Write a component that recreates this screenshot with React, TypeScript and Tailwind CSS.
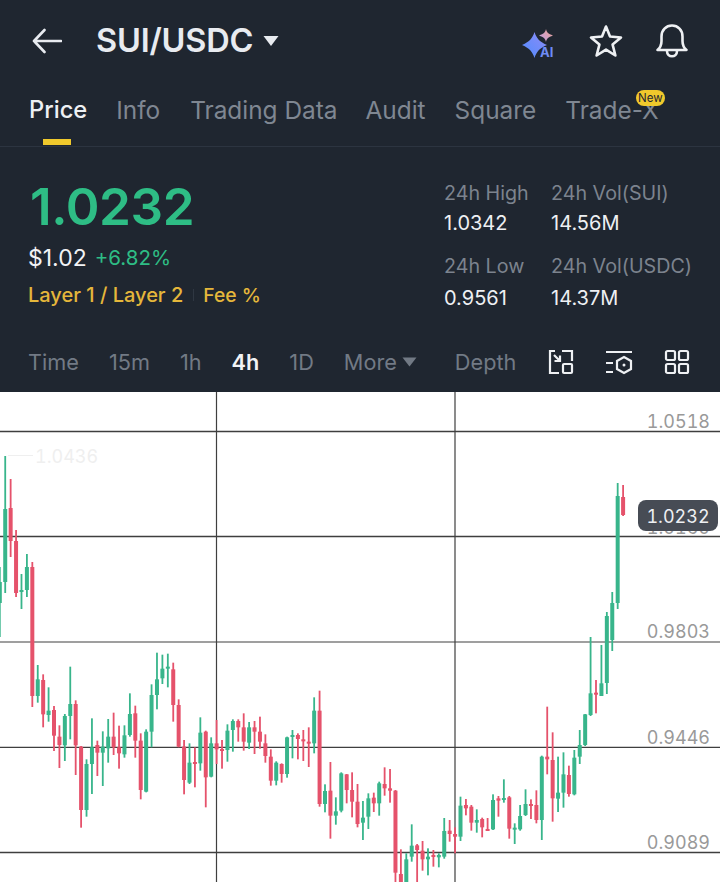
const GREEN = "#38b58b";
const RED = "#e5526b";

type C = [number, "g" | "r", number, number, number, number];

// [index, colour, high, low, bodyTop, bodyBottom] in page pixels
const raw: C[] = [
  [0, "g", 567, 637, 582, 603],
  [1, "g", 456, 593, 509, 582],
  [2, "r", 479, 557, 508, 541],
  [3, "r", 530, 597, 541, 593],
  [4, "g", 574, 609, 590, 592],
  [5, "g", 554, 597, 567, 590],
  [6, "r", 562, 707, 567, 696],
];

const z: Array<["g" | "r", number, number, number, number]> = [
  ["g", 75, 188, 118, 168], ["r", 103, 262, 120, 223], ["g", 142, 245, 212, 225], ["r", 198, 333, 210, 287],
  ["r", 256, 384, 290, 315], ["g", 222, 363, 228, 316], ["g", 80, 298, 192, 228], ["r", 181, 405, 192, 316],
  ["r", 318, 563, 320, 510], ["g", 358, 530, 372, 510], ["g", 235, 462, 322, 372], ["r", 302, 408, 315, 338],
  ["g", 274, 438, 320, 338], ["g", 237, 368, 290, 325], ["r", 218, 345, 290, 322], ["r", 257, 386, 322, 340],
  ["g", 256, 353, 286, 343], ["g", 160, 290, 222, 285], ["r", 197, 353, 220, 302], ["r", 280, 478, 302, 450],
  ["g", 268, 457, 275, 455], ["g", 133, 322, 165, 275], ["g", 38, 208, 118, 165], ["g", 44, 132, 86, 115],
  ["g", 41, 142, 80, 86], ["r", 68, 245, 88, 195], ["r", 178, 322, 195, 320], ["r", 300, 463, 320, 420],
  ["g", 310, 432, 368, 428], ["r", 322, 442, 366, 370], ["g", 232, 392, 278, 370], ["r", 272, 502, 275, 412],
  ["g", 292, 412, 310, 410], ["r", 240, 372, 310, 328], ["r", 300, 386, 327, 332], ["g", 253, 365, 272, 330],
  ["g", 238, 335, 243, 270], ["r", 238, 305, 243, 262],
  ["r", 220, 332, 262, 305], ["g", 246, 327, 262, 308], ["r", 243, 342, 262, 275], ["r", 230, 326, 275, 305],
  ["r", 283, 368, 310, 348], ["r", 328, 437, 350, 422], ["g", 364, 436, 368, 422], ["r", 370, 428, 372, 402],
  ["g", 290, 413, 292, 402], ["g", 270, 355, 285, 290], ["r", 280, 358, 285, 297], ["r", 270, 363, 298, 303],
  ["r", 262, 381, 305, 310], ["g", 172, 340, 212, 310], ["r", 152, 500, 212, 492], ["g", 433, 517, 453, 492],
  ["r", 366, 596, 452, 527], ["g", 472, 554, 514, 527], ["g", 397, 517, 400, 512], ["r", 402, 490, 403, 450],
  ["r", 397, 532, 450, 485], ["r", 432, 562, 485, 552], ["g", 483, 600, 533, 548], ["g", 460, 567, 475, 530],
  ["r", 458, 516, 473, 490], ["g", 425, 527, 430, 490], ["r", 382, 467, 432, 445], ["r", 387, 488, 445, 452],
  ["r", 450, 726, 452, 698], ["r", 628, 726, 702, 726], ["g", 640, 726, 658, 726], ["g", 553, 665, 617, 650],
  ["r", 612, 726, 616, 630], ["r", 603, 692, 632, 658], ["g", 625, 706, 650, 658], ["r", 630, 680, 645, 650],
  ["g", 640, 682, 645, 652], ["g", 534, 656, 573, 650], ["r", 540, 605, 572, 582], ["r", 562, 640, 582, 590],
  ["g", 470, 603, 497, 590], ["r", 477, 526, 495, 505], ["r", 495, 572, 500, 548], ["g", 508, 578, 540, 548],
  ["r", 533, 592, 537, 562], ["r", 534, 573, 567, 572], ["g", 463, 570, 480, 568], ["r", 468, 530, 475, 482],
  ["g", 418, 488, 474, 478], ["r", 468, 596, 472, 566], ["g", 550, 612, 563, 567], ["g", 495, 572, 528, 568],
  ["g", 448, 528, 492, 525], ["r", 478, 537, 492, 495], ["r", 451, 550, 495, 540], ["g", 347, 600, 350, 540],
  ["r", 200, 403, 350, 358], ["r", 277, 545, 360, 475], ["g", 350, 516, 458, 476], ["g", 337, 503, 403, 458],
  ["r", 377, 470, 405, 462], ["g", 330, 466, 353, 463], ["g", 270, 372, 315, 350], ["g", 222, 318, 223, 315],
  ["g", -9, 228, 160, 225], ["r", 120, 220, 158, 163], ["g", 15, 168, 130, 168],
];

const y = (v: number) => 640 + v / 3;
const candles: C[] = [
  ...raw,
  ...z.map((c, k): C => [k + 7, c[0], y(c[1]), y(c[2]), y(c[3]), y(c[4])]),
  [112, "g", 612, 694, 616, 683],
  [113, "g", 592, 651, 603, 640],
  [114, "g", 483, 609, 496, 603],
  [115, "r", 485, 516, 497, 515],
];

const BASE = 392;
const hLines = [
  { v: 431.5, c: "#3f3f3f" },
  { v: 536.5, c: "#3f3f3f" },
  { v: 642, c: "#7f7f7f" },
  { v: 747.3, c: "#3f3f3f" },
  { v: 852.5, c: "#3f3f3f" },
];

function Chart() {
  return (
    <svg width="720" height="490" viewBox="0 392 720 490" className="block">
      {hLines.map((l) => (
        <line key={l.v} x1="0" x2="720" y1={l.v} y2={l.v} stroke={l.c} strokeWidth="1.3" />
      ))}
      <line x1="216.5" x2="216.5" y1={BASE} y2="882" stroke="#3f3f3f" strokeWidth="1.2" />
      <line x1="455" x2="455" y1={BASE} y2="882" stroke="#3f3f3f" strokeWidth="1.2" />
      <line x1="8" x2="33" y1="455.5" y2="455.5" stroke="#efefef" strokeWidth="1" />
      {candles.map(([i, col, hi, lo, top, bot]) => {
        const x = 5.42 * i - 0.2;
        const fill = col === "g" ? GREEN : RED;
        const h = Math.max(bot - top, 2);
        return (
          <g key={i} fill={fill}>
            <rect x={x - 0.9} y={hi} width="1.8" height={lo - hi} />
            <rect x={x - 2} y={top} width="4" height={h} />
          </g>
        );
      })}
    </svg>
  );
}

function Axis({ label, top }: { label: string; top: string }) {
  return (
    <span className={`absolute right-[10px] text-[18px] leading-[24px] tabular-nums text-[#999999] ${top}`}>{label}</span>
  );
}

function AiIcon() {
  return (
    <div className="relative h-[36px] w-[36px]">
      <svg width="36" height="36" viewBox="0 0 36 36" className="block">
        <defs>
          <linearGradient id="aiA" x1="0" y1="1" x2="1" y2="0">
            <stop offset="0" stopColor="#4f8cff" />
            <stop offset="1" stopColor="#8f8bf5" />
          </linearGradient>
          <linearGradient id="aiB" x1="0" y1="1" x2="1" y2="0">
            <stop offset="0" stopColor="#b99bea" />
            <stop offset="1" stopColor="#f2a68f" />
          </linearGradient>
        </defs>
        <path d="M13.5 9 C15.5 15 18 18.5 26 22 C18 25.5 15.5 29 13.5 35 C11.5 29 9 25.5 1 22 C9 18.5 11.5 15 13.5 9 Z" fill="url(#aiA)" />
        <path d="M25 6 C25.8 9.5 27 10.7 32 12.5 C27 14.3 25.8 15.5 25 19 C24.2 15.5 23 14.3 18 12.5 C23 10.7 24.2 9.5 25 6 Z" fill="url(#aiB)" />
      </svg>
      <span className="absolute left-[19px] top-[22px] text-[13px] font-bold leading-[14px] text-[#6f8cf5]">AI</span>
    </div>
  );
}

function Stat({ label, value, width, gap }: { label: string; value: string; width: string; gap: string }) {
  return (
    <div className={`flex flex-col whitespace-nowrap ${gap} ${width}`}>
      <span className="text-[19.7px] leading-[24px] text-[#7c838e]">{label}</span>
      <span className="text-[20px] leading-[24px] text-[#eef0f3]">{value}</span>
    </div>
  );
}

function Range({ label, active }: { label: string; active?: boolean }) {
  return (
    <span className={active ? "text-[#f2f3f5] font-semibold" : "text-[#727a85]"}>{label}</span>
  );
}

export default function App() {
  return (
    <div
      className="relative h-[882px] w-[720px] overflow-hidden bg-white"
      style={{ fontFamily: "Inter, 'Liberation Sans', sans-serif" }}
    >
      <div className="flex h-[392px] flex-col bg-[#1f2630]">
        {/* header */}
        <div className="flex h-[82px] items-center pl-[32px] pr-[30px]">
          <svg width="30" height="26" viewBox="0 0 30 26" fill="none" stroke="#e8ebf0" strokeWidth="2.6" strokeLinecap="round" strokeLinejoin="round">
            <path d="M29 13 H2 M12.5 2 L2 13 L12.5 24" />
          </svg>
          <span className="ml-[34px] text-[32.5px] font-semibold leading-[40px] tracking-[-0.2px] text-[#e8ebf0]">SUI/USDC</span>
          <svg width="16" height="12" viewBox="0 0 16 12" className="ml-[10px]">
            <path d="M0.5 1 H15.5 L8 11 Z" fill="#e8ebf0" />
          </svg>
          <div className="ml-auto flex items-center">
            <AiIcon />
            <svg width="36" height="36" viewBox="0 0 36 36" fill="none" stroke="#eef0f3" strokeWidth="2.6" strokeLinejoin="round" className="ml-[31px]">
              <path d="M18 3.5 L22 13.5 L33 14.5 L24.6 21.6 L27.4 32.5 L18 26.6 L8.6 32.5 L11.4 21.6 L3 14.5 L14 13.5 Z" />
            </svg>
            <svg width="36" height="36" viewBox="0 0 36 36" fill="none" stroke="#eef0f3" strokeWidth="2.6" strokeLinecap="round" strokeLinejoin="round" className="ml-[30px]">
              <path d="M3.5 27 C6.5 24.5 7.5 21.5 7.5 18 V13.5 C7.5 7 12 2.5 18 2.5 C24 2.5 28.5 7 28.5 13.5 V18 C28.5 21.5 29.5 24.5 32.5 27 Z" />
              <path d="M13 28 C13 35 23 35 23 28" />
            </svg>
          </div>
        </div>

        {/* tabs */}
        <div className="relative h-[65px] border-b border-[#2c3440]">
          <div className="flex items-center gap-[28px] pl-[29px] pt-[13px] text-[24.4px] leading-[30px] text-[#7f8792]">
            <span className="mr-[1px] text-[23.7px] font-medium text-[#eef0f3]">Price</span>
            <span className="mr-[2px]">Info</span>
            <span>Trading Data</span>
            <span>Audit</span>
            <span className="ml-[1px]">Square</span>
            <span className="ml-[1px]">Trade-X</span>
          </div>
          <div className="ml-[43px] mt-[14px] h-[6px] w-[28px] bg-[#f0c92c]" />
          <span className="absolute left-[636px] top-[8px] rounded-[8px] bg-[#f0c92c] px-[2px] text-[11.5px] leading-[16px] text-[#1f2630]">New</span>
        </div>

        {/* price summary */}
        <div className="flex h-[183px] justify-between pl-[28px] pr-[28px] pt-[29px]">
          <div className="flex flex-col">
            <span className="ml-[2px] text-[51.2px] font-semibold leading-[60px] tracking-[-0.4px] text-[#2ebd85]">1.0232</span>
            <div className="mt-[9px] flex items-center gap-[8px] leading-[26px]">
              <span className="text-[23px] text-[#f2f3f5]">$1.02</span>
              <span className="text-[20.5px] text-[#2ebd85]">+6.82%</span>
            </div>
            <div className="mt-[12px] flex items-center text-[20px] font-medium leading-[24px] text-[#e5b73b]">
              <span>Layer 1 / Layer 2</span>
              <span className="mx-[9.5px] h-[12px] w-px bg-[#2f3742]" />
              <span className="text-[19.3px]">Fee %</span>
            </div>
          </div>
          <div className="flex flex-col gap-[19px] pt-[5px]">
            <div className="flex">
              <Stat label="24h High" value="1.0342" width="w-[107px]" gap="gap-[6px]" />
              <Stat label="24h Vol(SUI)" value="14.56M" width="w-[141px]" gap="gap-[6px]" />
            </div>
            <div className="flex">
              <Stat label="24h Low" value="0.9561" width="w-[107px]" gap="gap-[8px]" />
              <Stat label="24h Vol(USDC)" value="14.37M" width="w-[141px]" gap="gap-[8px]" />
            </div>
          </div>
        </div>

        {/* range row */}
        <div className="flex h-[62px] items-center pl-[28px] pr-[30px] pt-[2px] text-[21.7px] leading-[28px]">
          <div className="flex items-center gap-[30px]">
            <Range label="Time" />
            <Range label="15m" />
            <Range label="1h" />
            <Range label="4h" active />
            <Range label="1D" />
            <div className="flex items-center gap-[5px]">
              <Range label="More" />
              <svg width="15" height="10" viewBox="0 0 15 10">
                <path d="M0.5 0.5 H14.5 L7.5 9.5 Z" fill="#727a85" />
              </svg>
            </div>
          </div>
          <span className="ml-[38px] text-[#727a85]">Depth</span>
          <div className="ml-auto flex items-center gap-[31px]">
            <svg width="26" height="26" viewBox="0 0 26 26" fill="none" stroke="#eef0f3" strokeWidth="2.2">
              <path d="M7 2 H2 V24 H11 M14 2 H24 V12" />
              <rect x="15" y="15" width="9" height="9" rx="1" />
              <path d="M6 6 L12 12 M12 6.5 V12 H6.5" />
            </svg>
            <svg width="28" height="26" viewBox="0 0 28 26" fill="none" stroke="#eef0f3" strokeWidth="2.2">
              <path d="M1 3 H27 M1 14 H8 M1 23 H8" />
              <path d="M19 8 L26 12 V20 L19 24 L12 20 V12 Z" />
              <circle cx="19" cy="16" r="1.5" fill="#eef0f3" stroke="none" />
            </svg>
            <svg width="26" height="26" viewBox="0 0 26 26" fill="none" stroke="#eef0f3" strokeWidth="2.2">
              <rect x="2" y="2" width="9" height="9" rx="1.5" />
              <rect x="15" y="2" width="9" height="9" rx="1.5" />
              <rect x="2" y="15" width="9" height="9" rx="1.5" />
              <rect x="15" y="15" width="9" height="9" rx="1.5" />
            </svg>
          </div>
        </div>
      </div>

      {/* chart canvas */}
      <div className="relative h-[490px]">
        <Chart />
        <span className="absolute left-[35px] top-[53px] text-[18px] leading-[24px] tabular-nums text-[#efefef]">1.0436</span>
        <Axis label="1.0518" top="top-[18px]" />
        <Axis label="1.0160" top="top-[124px]" />
        <Axis label="0.9803" top="top-[228px]" />
        <Axis label="0.9446" top="top-[334px]" />
        <Axis label="0.9089" top="top-[439px]" />
        <span className="absolute left-[638px] top-[108px] flex h-[31px] w-[80px] items-center justify-center rounded-[8px] bg-[#474c55] pt-[2px] text-[18px] tabular-nums text-[#eef0f3]">
          1.0232
        </span>
      </div>
    </div>
  );
}
